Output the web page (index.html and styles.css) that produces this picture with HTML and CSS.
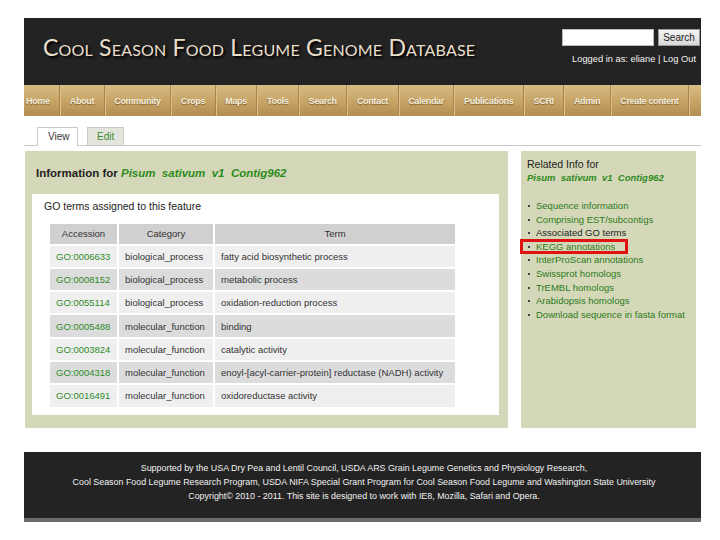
FILE: index.html
```html
<!DOCTYPE html>
<html>
<head>
<meta charset="utf-8">
<link rel="stylesheet" href="styles.css">
</head>
<body>
<div class="page">
  <header class="top">
    <div class="brand">Cool Season Food Legume Genome Database</div>
    <div class="account">
      <div class="search"><input class="search-input" type="text"><button class="search-btn">Search</button></div>
      <div class="login">Logged in as: eliane | Log Out</div>
    </div>
  </header>
  <nav class="nav">
    <a class="nav-item first">Home</a>
    <a class="nav-item">About</a>
    <a class="nav-item">Community</a>
    <a class="nav-item">Crops</a>
    <a class="nav-item">Maps</a>
    <a class="nav-item">Tools</a>
    <a class="nav-item">Search</a>
    <a class="nav-item">Contact</a>
    <a class="nav-item">Calendar</a>
    <a class="nav-item">Publications</a>
    <a class="nav-item">SCRI</a>
    <a class="nav-item">Admin</a>
    <a class="nav-item">Create content</a>
  </nav>
  <div class="tabs">
    <span class="tab active">View</span>
    <span class="tab">Edit</span>
  </div>
  <div class="content">
    <main class="main">
      <h2 class="info-title">Information for <em class="feature">Pisum&nbsp; sativum&nbsp; v1&nbsp; Contig962</em></h2>
      <div class="box">
        <div class="box-title">GO terms assigned to this feature</div>
        <table class="go">
          <thead>
            <tr><th class="c1">Accession</th><th class="c2">Category</th><th>Term</th></tr>
          </thead>
          <tbody>
            <tr><td class="acc">GO:0006633</td><td>biological_process</td><td>fatty acid biosynthetic process</td></tr>
            <tr><td class="acc">GO:0008152</td><td>biological_process</td><td>metabolic process</td></tr>
            <tr><td class="acc">GO:0055114</td><td>biological_process</td><td>oxidation-reduction process</td></tr>
            <tr><td class="acc">GO:0005488</td><td>molecular_function</td><td>binding</td></tr>
            <tr><td class="acc">GO:0003824</td><td>molecular_function</td><td>catalytic activity</td></tr>
            <tr><td class="acc">GO:0004318</td><td>molecular_function</td><td>enoyl-[acyl-carrier-protein] reductase (NADH) activity</td></tr>
            <tr><td class="acc">GO:0016491</td><td>molecular_function</td><td>oxidoreductase activity</td></tr>
          </tbody>
        </table>
      </div>
    </main>
    <aside class="side">
      <div class="side-title">Related Info for</div>
      <div class="side-feature">Pisum&nbsp; sativum&nbsp; v1&nbsp; Contig962</div>
      <ul class="links">
        <li class="link">Sequence information</li>
        <li class="link">Comprising EST/subcontigs</li>
        <li class="current">Associated GO terms</li>
        <li class="link marked">KEGG annotations<span class="highlight"></span></li>
        <li class="link">InterProScan annotations</li>
        <li class="link">Swissprot homologs</li>
        <li class="link">TrEMBL homologs</li>
        <li class="link">Arabidopsis homologs</li>
        <li class="link">Download sequence in fasta format</li>
      </ul>
    </aside>
  </div>
  <footer class="footer">
    <p>Supported by the USA Dry Pea and Lentil Council, USDA ARS Grain Legume Genetics and Physiology Research,</p>
    <p>Cool Season Food Legume Research Program, USDA NIFA Special Grant Program for Cool Season Food Legume and Washington State University</p>
    <p>Copyright© 2010 - 2011. This site is designed to work with IE8, Mozilla, Safari and Opera.</p>
  </footer>
</div>
</body>
</html>
```

FILE: styles.css
```css
html, body {
  margin: 0;
  padding: 0;
  background: #ffffff;
}
body {
  font-family: "Liberation Sans", Arial, sans-serif;
  font-size: 10px;
  color: #222;
}
.page {
  width: 677px;
  margin: 18px 0 0 24px;
}
.top {
  height: 67px;
  background: #232323;
  display: flex;
  justify-content: space-between;
}
.brand {
  font-family: "Lato", "Open Sans", sans-serif;
  font-variant: small-caps;
  font-size: 23px;
  letter-spacing: 0.2px;
  color: #e9dfcb;
  text-shadow: 2px 2px 2px #000;
  padding: 15px 0 0 19px;
  line-height: 28px;
}
.account {
  display: flex;
  flex-direction: column;
  align-items: flex-end;
  padding: 11px 1px 0 0;
}
.search {
  display: flex;
  gap: 4px;
}
.search-input {
  width: 90px;
  height: 15px;
  border: 1px solid #bbb;
  padding: 0;
  margin: 0;
  background: #fff;
}
.search-btn {
  width: 42px;
  height: 17px;
  padding: 0;
  margin: 0;
  border: 1px solid #999;
  background: linear-gradient(#f4f4f4, #d8d8d8);
  font-family: "Liberation Sans", Arial, sans-serif;
  font-size: 10px;
  color: #222;
}
.login {
  color: #f4f4f4;
  font-size: 9.3px;
  margin-top: 8px;
  padding-right: 4px;
}
.nav {
  height: 31px;
  display: flex;
  background: linear-gradient(#d8bc84, #c5a265 55%, #b38c50);
}
.nav-item {
  display: flex;
  align-items: center;
  padding: 0 9.6px;
  font-weight: bold;
  font-size: 9px;
  letter-spacing: -0.35px;
  color: #f6eedd;
  text-shadow: 0 1px 1px rgba(80, 55, 20, 0.6);
  border-right: 1px solid #a7834b;
  box-shadow: 1px 0 0 #dcc18e;
}
.nav-item.first {
  padding-left: 2px;
}
.tabs {
  height: 29px;
  display: flex;
  align-items: flex-end;
  gap: 9px;
  padding-left: 13px;
  border-bottom: 1px solid #c9c9c9;
  margin-bottom: 5px;
}
.tab {
  height: 17px;
  line-height: 17px;
  border: 1px solid #c9c9c9;
  border-bottom: none;
  background: #e3e5dc;
  color: #3a8a2a;
  font-size: 10px;
  padding: 0 9px;
}
.tab.active {
  background: #fff;
  color: #333;
  padding: 0 10px 1px;
  margin-bottom: -1px;
  width: 19px;
}
.content {
  display: flex;
  gap: 13px;
  padding-left: 1px;
}
.main {
  width: 483px;
  background: #d5d8b8;
  padding: 0 9px 13px 7px;
  box-sizing: border-box;
}
.info-title {
  margin: 0;
  font-size: 11.5px;
  font-weight: bold;
  color: #1e1e1e;
  padding: 16px 0 0 4px;
  height: 27px;
}
.feature {
  color: #2c8a1c;
}
.box {
  background: #fff;
  height: 221px;
  padding: 6px 0 0 16px;
  box-sizing: border-box;
}
.box-title {
  font-size: 10.5px;
  color: #222;
  margin-left: -4px;
  height: 22px;
}
.go {
  width: 409px;
  border-collapse: collapse;
  border: 1px solid #cfcfcf;
  font-size: 9.5px;
  color: #333;
}
.go th, .go td {
  border: 2px solid #fff;
  padding: 0 6px;
  text-align: left;
}
.go th {
  background: #d0d0d0;
  height: 19.5px;
  font-weight: normal;
  text-align: center;
  color: #333;
}
.go td {
  height: 21.3px;
}
.go tbody tr:nth-child(odd) td {
  background: #efefef;
}
.go tbody tr:nth-child(even) td {
  background: #dcdcdc;
}
.go .c1 {
  width: 55px;
}
.go .c2 {
  width: 82px;
}
.go .acc {
  color: #2e8a2a;
}
.side {
  width: 175px;
  background: #d5d8b8;
  padding: 7px 0 0 6px;
  box-sizing: border-box;
}
.side-title {
  font-size: 10.5px;
  color: #222;
  height: 14px;
}
.side-feature {
  font-size: 9.5px;
  font-weight: bold;
  font-style: italic;
  color: #2c8a1c;
  height: 27px;
}
.links {
  list-style: none;
  margin: 0;
  padding: 0;
}
.links li {
  position: relative;
  font-size: 9.5px;
  line-height: 13.6px;
  padding-left: 9px;
  color: #2c7a1c;
}
.links li::before {
  content: "";
  position: absolute;
  left: 1px;
  top: 6px;
  width: 2px;
  height: 2px;
  background: #444;
}
.links li.current {
  color: #222;
}
.highlight {
  position: absolute;
  left: -7px;
  top: -1px;
  width: 102px;
  height: 9px;
  border: 3px solid #e01313;
}
.footer {
  margin-top: 24px;
  background: #232323;
  height: 70px;
  padding-top: 9px;
  box-sizing: border-box;
  border-bottom: 4px solid #6a6a6a;
  text-align: center;
  color: #f2f2f2;
  font-size: 8.9px;
}
.footer p {
  margin: 0;
  line-height: 14px;
  padding-left: 3px;
}
```
